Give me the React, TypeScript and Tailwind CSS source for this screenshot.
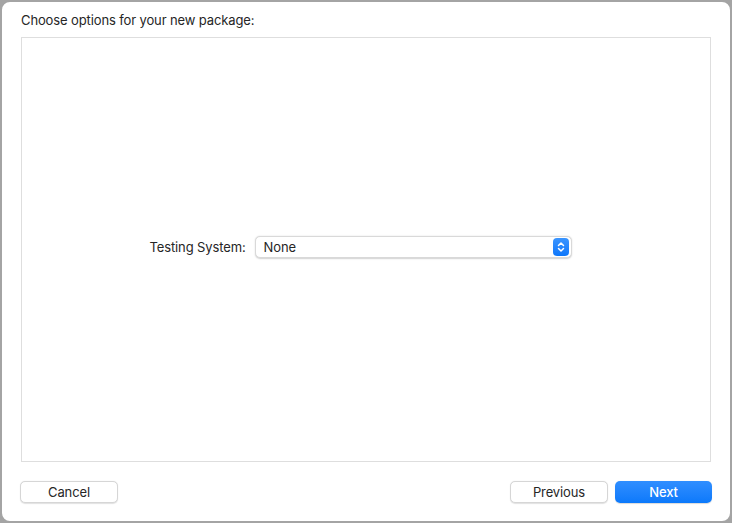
export default function App() {
  return (
    <div
      className="h-[523px] w-[732px] bg-[#a4a4a4] text-[13px] tracking-[-0.12px] text-[#262626]"
      style={{ fontFamily: 'Inter, "Noto Sans", sans-serif' }}
    >
      <div className="flex h-full w-full flex-col rounded-[10px] border-2 border-[#a4a4a4] bg-white">
        <div className="px-[19px] pt-[10px] leading-[16px]">Choose options for your new package:</div>

        <div className="mx-[19px] mt-[9px] flex flex-1 items-center justify-center border border-[#dedede] bg-white pr-[11px] pb-[5px]">
          <div className="flex items-center gap-[9px]">
            <span className="leading-[16px]">Testing System:</span>
            <button className="flex h-[22px] w-[317px] items-center justify-between rounded-[5px] border border-[#d9d9d9] bg-white pl-[8px] pr-[2px] shadow-[0_0.5px_1.5px_rgba(0,0,0,0.18)]">
              <span className="leading-[16px]">None</span>
              <span className="flex h-[18px] w-[16px] items-center justify-center rounded-[4px] bg-gradient-to-b from-[#3a95ff] to-[#0b77fb]">
                <svg width="8" height="12" viewBox="0 0 8 12" fill="none" stroke="white" strokeWidth="1.5" strokeLinecap="round" strokeLinejoin="round">
                  <path d="M1.5 4.5 L4 2 L6.5 4.5" />
                  <path d="M1.5 7.5 L4 10 L6.5 7.5" />
                </svg>
              </span>
            </button>
          </div>
        </div>

        <div className="mt-[19px] mb-[18px] flex h-[22px] items-center px-[18px]">
          <button className="h-[22px] w-[98px] rounded-[5px] border border-[#d6d6d6] bg-white leading-[16px] shadow-[0_0.5px_1px_rgba(0,0,0,0.12)]">
            Cancel
          </button>
          <div className="flex-1" />
          <div className="flex gap-[7px]">
            <button className="h-[22px] w-[98px] rounded-[5px] border border-[#d6d6d6] bg-white leading-[16px] shadow-[0_0.5px_1px_rgba(0,0,0,0.12)]">
              Previous
            </button>
            <button className="h-[22px] w-[97px] rounded-[5px] bg-gradient-to-b from-[#2f8eff] to-[#0a79fb] font-medium leading-[16px] text-white shadow-[0_0.5px_1px_rgba(0,0,0,0.15)]">
              Next
            </button>
          </div>
        </div>
      </div>
    </div>
  );
}
